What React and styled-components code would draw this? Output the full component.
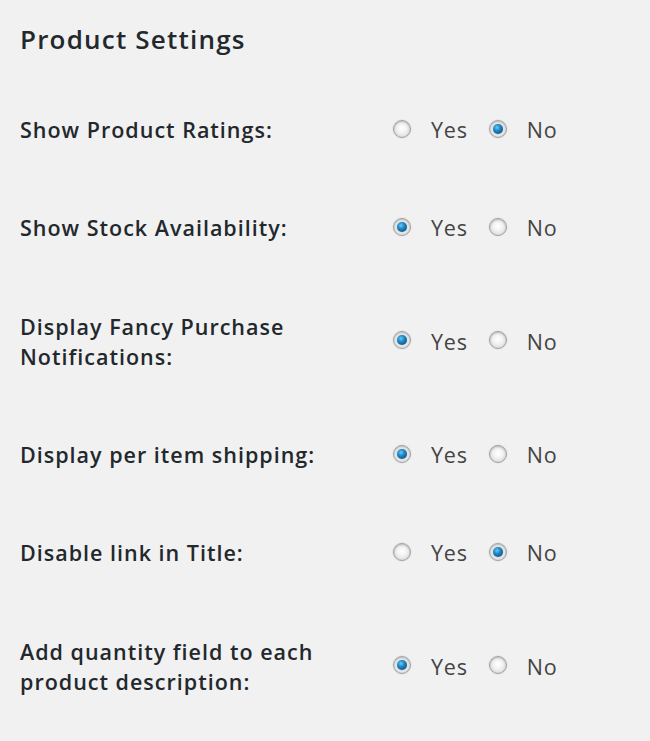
import React from 'react';
import styled, { createGlobalStyle } from 'styled-components';

const GlobalStyle = createGlobalStyle`
  html, body {
    margin: 0;
    padding: 0;
    background: #f1f1f1;
  }
  body {
    font-family: "Open Sans", "Noto Sans", sans-serif;
    color: #23282d;
  }
`;

const Page = styled.div`
  padding: 0 20px;
  min-height: 741px;
  box-sizing: border-box;
`;

const Title = styled.h2`
  margin: 0;
  padding-top: 21px;
  font-size: 26px;
  line-height: 36px;
  font-weight: 600;
  letter-spacing: 1.2px;
  color: #23282d;
`;

const Table = styled.div`
  margin-top: 24px;
  display: flex;
  flex-direction: column;
`;

const Row = styled.div`
  display: grid;
  grid-template-columns: 373px auto;
  align-items: center;
  height: ${p => (p.tall ? 129 : 98)}px;
`;

const Label = styled.div`
  font-size: 21.5px;
  line-height: 30px;
  font-weight: 600;
  letter-spacing: 1px;
  color: #23282d;
  padding-right: 20px;
`;

const Options = styled.div`
  display: flex;
  align-items: center;
  gap: 21px;
`;

const Option = styled.label`
  display: flex;
  align-items: center;
  gap: 20px;
  font-size: 21.5px;
  line-height: 30px;
  letter-spacing: 0.8px;
  color: #444;
`;

const Radio = styled.span`
  position: relative;
  width: 18px;
  height: 18px;
  border-radius: 50%;
  box-sizing: border-box;
  border: 1px solid #9ea3a8;
  background: radial-gradient(circle at 50% 45%, #ffffff 0%, #f2f2f2 40%, #cfcfcf 100%);
  box-shadow: inset 0 1px 2px rgba(0, 0, 0, 0.2), 0 0 0 1px rgba(0, 0, 0, 0.04);
  margin-top: -3px;

  &::after {
    content: '';
    display: ${p => (p.checked ? 'block' : 'none')};
    position: absolute;
    left: 3px;
    top: 3px;
    width: 10px;
    height: 10px;
    border-radius: 50%;
    background: radial-gradient(circle at 40% 35%, #6cc8f2 0%, #1a84c2 40%, #0a3f68 100%);
    box-shadow: 0 0 1px rgba(0, 0, 0, 0.5);
  }
`;

const settings = [
  { lines: ['Show Product Ratings:'], value: 'no' },
  { lines: ['Show Stock Availability:'], value: 'yes' },
  { lines: ['Display Fancy Purchase', 'Notifications:'], value: 'yes' },
  { lines: ['Display per item shipping:'], value: 'yes' },
  { lines: ['Disable link in Title:'], value: 'no' },
  { lines: ['Add quantity field to each', 'product description:'], value: 'yes' },
];

const SettingRow = ({ lines, value }) => (
  <Row tall={lines.length > 1}>
    <Label>
      {lines.map((l, i) => (
        <React.Fragment key={i}>
          {i > 0 && <br />}
          {l}
        </React.Fragment>
      ))}
    </Label>
    <Options>
      <Option>
        <Radio checked={value === 'yes'} />
        Yes
      </Option>
      <Option>
        <Radio checked={value === 'no'} />
        No
      </Option>
    </Options>
  </Row>
);

export default function App() {
  return (
    <Page>
      <GlobalStyle />
      <Title>Product Settings</Title>
      <Table>
        {settings.map(s => (
          <SettingRow key={s.lines.join(' ')} {...s} />
        ))}
      </Table>
    </Page>
  );
}
